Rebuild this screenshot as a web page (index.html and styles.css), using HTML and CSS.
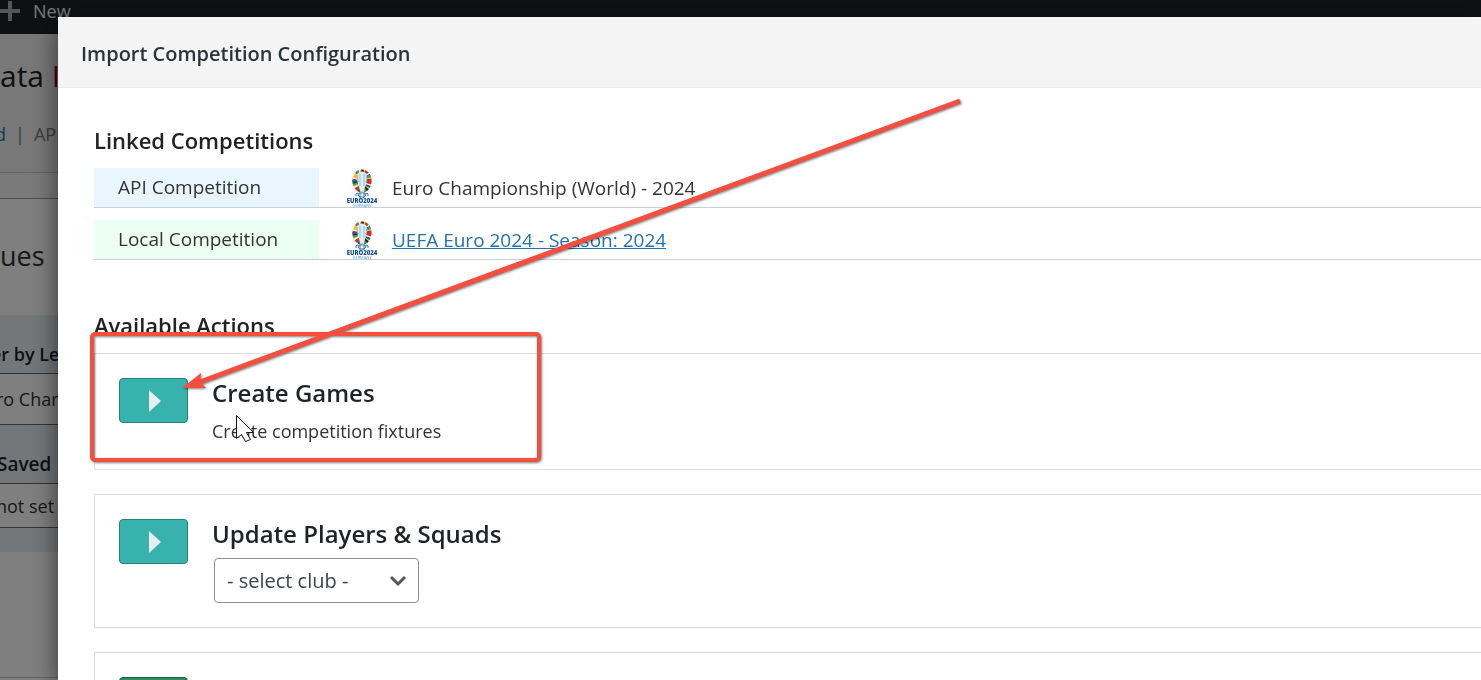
FILE: index.html
```html
<!DOCTYPE html>
<html lang="en">
<head>
    <meta charset="utf-8">
    <title>Import Competition Configuration</title>
    <link rel="stylesheet" href="styles.css">
</head>
<body>
    <!-- Admin page -->
    <div class="admin">
        <div class="adminbar">
            <svg class="plus" viewBox="0 0 20 20"><path d="M8 0h4v8h8v4h-8v8H8v-8H0V8h8z"/></svg>
            <span>New</span>
        </div>
        <div class="admin-title">ata <span class="red">I</span></div>
        <div class="admin-nav"><span class="blue">d</span> <span>|</span> <span>AP</span></div>
        <div class="notice"></div>
        <div class="admin-heading">ues</div>
        <div class="filter">er by Le</div>
        <div class="field">ro Char</div>
        <div class="filter saved">Saved</div>
        <div class="field small">not set</div>
        <div class="filter-end"></div>
        <div class="admin-rest"></div>
    </div>
    <div class="backdrop"></div>

    <!-- Modal -->
    <div class="modal">
        <div class="modal-header">
            <h1>Import Competition Configuration</h1>
        </div>
        <div class="modal-body">
            <h2>Linked Competitions</h2>
            <div class="linked">
                <div class="label api">API Competition</div>
                <svg class="logo" viewBox="0 0 32 38">
                    <defs>
                        <g id="euro">
                            <ellipse cx="16" cy="12" rx="7" ry="9" fill="none" stroke="#f4c430" stroke-width="5"/>
                            <ellipse cx="16" cy="12" rx="7" ry="9" fill="none" stroke="#d62b35" stroke-width="5" stroke-dasharray="3 5"/>
                            <ellipse cx="16" cy="12" rx="7" ry="9" fill="none" stroke="#1c5cab" stroke-width="5" stroke-dasharray="2 8" stroke-dashoffset="-4"/>
                            <ellipse cx="16" cy="12" rx="7" ry="9" fill="none" stroke="#22222a" stroke-width="5" stroke-dasharray="2 13" stroke-dashoffset="-7"/>
                            <ellipse cx="16" cy="12" rx="7" ry="9" fill="none" stroke="#35a568" stroke-width="5" stroke-dasharray="2 10" stroke-dashoffset="-9"/>
                            <ellipse cx="16" cy="12" rx="7" ry="9" fill="none" stroke="#fff" stroke-width="5" stroke-dasharray="1 7" stroke-dashoffset="-3"/>
                            <path d="M11 5q5-5 10 0l-1 9-2 8h-4l-2-8z" fill="#d9eff2"/>
                            <path d="M12 6q-2 5 1 7M20 6q2 5-1 7M14 5v12M18 5v12" fill="none" stroke="#8fc4d8" stroke-width="1"/>
                            <path d="M13 24h6l1 2-2 2h-4l-2-2zM12 24q-3 0-2 3M20 24q3 0 2 3M14 24v5M18 24v5" fill="none" stroke="#3474b5" stroke-width="1"/>
                            <text x="16" y="34" class="logo-name">EURO2024</text>
                            <text x="16" y="38" class="logo-place">GERMANY</text>
                        </g>
                    </defs>
                    <use href="#euro"/>
                </svg>
                <span>Euro Championship (World) - 2024</span>
            </div>
            <div class="linked">
                <div class="label local">Local Competition</div>
                <svg class="logo" viewBox="0 0 32 38"><use href="#euro"/></svg>
                <a href="#">UEFA Euro 2024 - Season: 2024</a>
            </div>

            <h2 class="actions-title">Available Actions</h2>
            <div class="action">
                <button class="run" aria-label="Create Games"><svg viewBox="0 0 12 22"><path d="M0 0l12 11L0 22z"/></svg></button>
                <div>
                    <h3>Create Games</h3>
                    <p>Create competition fixtures</p>
                </div>
            </div>
            <div class="action">
                <button class="run" aria-label="Update Players"><svg viewBox="0 0 12 22"><path d="M0 0l12 11L0 22z"/></svg></button>
                <div>
                    <h3><label for="club">Update Players &amp; Squads</label></h3>
                    <select id="club" name="club">
                        <option>- select club -</option>
                    </select>
                </div>
            </div>
            <div class="action">
                <button class="run green" aria-label="Run"></button>
            </div>
        </div>
    </div>

    <!-- Annotation and pointer -->
    <svg class="marks" width="980" height="480">
        <g class="mark">
            <rect x="92" y="334" width="447" height="126" rx="3" fill="none" stroke="#f44e3f" stroke-width="4"/>
            <path d="M960 101L200 382" stroke="#f44e3f" stroke-width="5"/>
            <path d="M182 388l19-15-1 9 6 6z" fill="#f44e3f"/>
        </g>
        <path d="M236.500 415.500v23l5-4 4 7 5-2-4-7h7z" fill="#fff" stroke="#16162a"/>
    </svg>
</body>
</html>
```
FILE: styles.css
```css
* {
    box-sizing: border-box;
}
body {
    margin: 0;
    height: 100vh;
    overflow: hidden;
    background: #fff;
    color: #333;
    font-family: "Open Sans", "Noto Sans", sans-serif;
    font-size: 18px;
}
h1, h2, h3, p {
    margin: 0;
}

/* page under the modal */
.admin {
    white-space: nowrap;
    color: #2c3338;
}
.adminbar {
    display: flex;
    align-items: center;
    gap: 13px;
    height: 34px;
    padding-bottom: 12px;
    background: #1d2327;
    color: #f0f0f1;
}
.plus {
    width: 20px;
    height: 20px;
    fill: #a7aaad;
}
.admin-title {
    height: 82px;
    background: #f0f0f1;
    color: #1d2327;
    font-size: 30px;
    line-height: 84px;
}
.red {
    color: #b00010;
}
.admin-nav {
    display: flex;
    gap: 9px;
    height: 57px;
    margin-left: -5px;
    border-bottom: 1px solid #c3c4c7;
    background: #f0f0f1;
    color: #787c82;
    line-height: 36px;
}
.blue {
    color: #2271b1;
}
.notice {
    height: 26px;
    border-bottom: 1px solid #8aa0b0;
    background: #f5f5f6;
}
.admin-heading {
    height: 116px;
    font-size: 27px;
    line-height: 114px;
}
.filter {
    height: 59px;
    padding-top: 20px;
    border-bottom: 1px solid #646970;
    background: #e6eff5;
    color: #1d2327;
    font-weight: 600;
    line-height: 38px;
    text-indent: -9px;
}
.saved {
    font-size: 19px;
    text-indent: -3px;
}
.field {
    height: 51px;
    border-bottom: 1px solid #646970;
    line-height: 50px;
    text-indent: -4px;
}
.small {
    height: 44px;
    line-height: 44px;
}
.filter-end {
    height: 24px;
    background: #e6eff5;
}
.admin-rest {
    height: 126px;
    border-bottom: 1px solid #c3c4c7;
}
.backdrop {
    position: fixed;
    inset: 0;
    background: rgba(0, 0, 0, 0.5);
}

/* modal */
.modal {
    position: fixed;
    top: 17px;
    right: 0;
    bottom: 0;
    left: 58px;
    overflow: hidden;
    background: #fff;
    box-shadow: 0 8px 24px rgba(0, 0, 0, 0.6);
}
.modal-header {
    height: 71px;
    padding: 0 23px;
    border-bottom: 1px solid #e8e8e8;
    background: #f4f4f4;
}
h1 {
    color: #2c3338;
    font-size: 20px;
    font-weight: 600;
    line-height: 74px;
}
.modal-body {
    padding: 32px 0 0 36px;
}
h2 {
    height: 48px;
    color: #222;
    font-size: 22px;
    font-weight: 600;
    line-height: 40px;
}
.linked {
    display: flex;
    align-items: center;
    height: 40px;
    margin-bottom: 12px;
    border-bottom: 1px solid #c5d0d8;
    font-size: 19px;
}
.label {
    width: 225px;
    height: 39px;
    padding-left: 24px;
    line-height: 39px;
}
.api {
    background: #e9f6ff;
}
.local {
    background: #edfff2;
}
.logo {
    width: 32px;
    height: 38px;
    margin: 0 14px 0 27px;
}
.logo-name {
    fill: #174f96;
    font-size: 6px;
    font-weight: 800;
    text-anchor: middle;
}
.logo-place {
    fill: #5c9bcb;
    font-size: 4px;
    text-anchor: middle;
}
a {
    color: #2271b1;
}
.actions-title {
    margin-top: 45px;
}
.action {
    display: flex;
    align-items: flex-start;
    gap: 24px;
    margin-bottom: 24px;
    padding: 24px;
    border: 1px solid #dcdee5;
    border-right: 0;
}
.run {
    display: flex;
    align-items: center;
    justify-content: center;
    width: 69px;
    height: 45px;
    border: 1px solid #2b7f7b;
    border-radius: 4px;
    background: #38b2ac;
}
.run svg {
    width: 12px;
    height: 22px;
    margin-left: 3px;
    fill: #e8edf2;
}
.green {
    border-color: #1d5e40;
    background: #2d8f5c;
}
h3 {
    color: #1d2327;
    font-size: 24px;
    font-weight: 600;
    line-height: 30px;
}
.action p {
    margin-top: 10px;
    line-height: 27px;
}
select {
    display: block;
    width: 205px;
    height: 45px;
    margin: 9px 0 0 2px;
    padding: 0 12px;
    border: 1px solid #8c8f94;
    border-radius: 4px;
    appearance: none;
    background: #fff url("data:image/svg+xml,%3Csvg xmlns='http://www.w3.org/2000/svg' width='18' height='12'%3E%3Cpath d='M2 2l7 7 7-7' fill='none' stroke='%23555' stroke-width='3'/%3E%3C/svg%3E") no-repeat right 11px center;
    color: #3c434a;
    font-family: inherit;
    font-size: 20px;
}

/* red box, arrow and mouse pointer */
.marks {
    position: absolute;
    top: 0;
    left: 0;
    pointer-events: none;
}
.mark {
    filter: drop-shadow(1px 1px 1px rgba(0, 0, 0, 0.5));
}
```
